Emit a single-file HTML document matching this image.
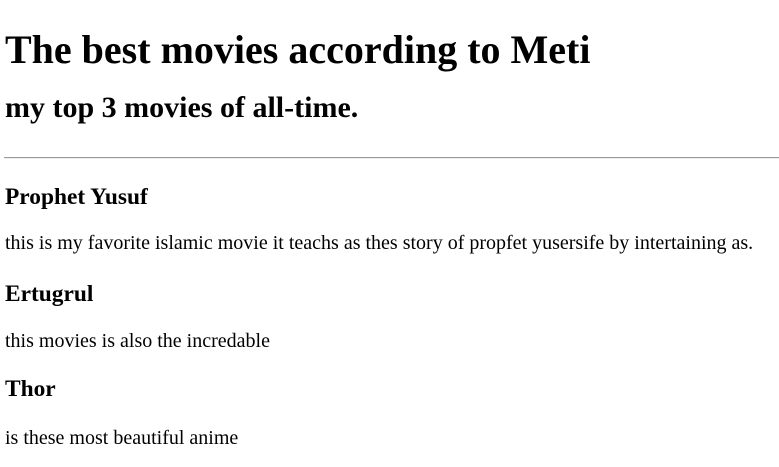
<!DOCTYPE html>
<html><head><meta charset="utf-8"><style>
html,body{margin:0;padding:0;background:#fff;width:779px;height:467px;overflow:hidden;position:relative}
div{position:absolute;left:5px;white-space:nowrap;font-family:"Liberation Serif",serif;color:#000;line-height:1.15}
.h1{font-size:40px;font-weight:bold;top:27px}
.h2{font-size:30px;font-weight:bold;top:91px}
.h3{font-size:23.4px;font-weight:bold}
.p{font-size:20px}
.hr{left:4px;right:0;top:157px;height:0;border-top:1px solid #9a9a9a;border-bottom:1px solid #eee}
</style></head><body>
<div class="h1">The best movies according to Meti</div>
<div class="h2">my top 3 movies of all-time.</div>
<div class="hr"></div>
<div class="h3" style="top:184px">Prophet Yusuf</div>
<div class="p" style="top:232px">this is my favorite islamic movie it teachs as thes story of propfet yusersife by intertaining as.</div>
<div class="h3" style="top:281px">Ertugrul</div>
<div class="p" style="top:330px">this movies is also the incredable</div>
<div class="h3" style="top:376px">Thor</div>
<div class="p" style="top:427px">is these most beautiful anime</div>
</body></html>
